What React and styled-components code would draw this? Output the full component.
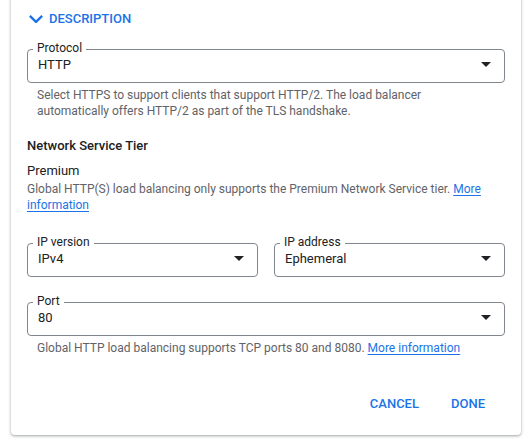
import React from 'react';
import styled, { createGlobalStyle } from 'styled-components';

const Global = createGlobalStyle`
  html, body { margin: 0; padding: 0; background: #fff; }
  body {
    font-family: Roboto, "Noto Sans", Arial, sans-serif;
    color: #202124;
    -webkit-font-smoothing: antialiased;
  }
  * { box-sizing: border-box; }
`;

const Page = styled.div`
  width: 531px;
  height: 441px;
  overflow: hidden;
  padding-left: 11px;
`;

const Card = styled.div`
  width: 510px;
  margin-top: -10px;
  background: #fff;
  border-radius: 0 0 4px 4px;
  box-shadow: 0 1px 2px 0 rgba(60, 64, 67, 0.3), 0 1px 3px 1px rgba(60, 64, 67, 0.15);
  padding: 19px 16px 13px;
  display: flex;
  flex-direction: column;
`;

const Toggle = styled.button`
  all: unset;
  display: flex;
  align-items: center;
  gap: 6px;
  height: 20px;
  padding-left: 2px;
  font-size: 13px;
  font-weight: 500;
  line-height: 20px;
  color: #1a73e8;
  text-transform: uppercase;
  cursor: pointer;
`;

const Field = styled.div`
  position: relative;
  height: 34px;
  border: 1px solid #80868b;
  border-radius: 4px;
  padding: 0 13px 3px 10px;
  display: flex;
  align-items: center;
  justify-content: space-between;
  margin-top: ${p => p.$mt || 0}px;
`;

const FieldLabel = styled.span`
  position: absolute;
  top: -10px;
  left: 5px;
  padding: 0 4px;
  background: #fff;
  font-size: 12px;
  line-height: 16px;
  color: #202124;
  white-space: nowrap;
`;

const FieldValue = styled.span`
  font-size: 13px;
  line-height: 20px;
  color: #202124;
`;

const Helper = styled.p`
  margin: ${p => p.$mt ?? 4}px 0 0;
  padding-left: ${p => p.$indent ? 10 : 0}px;
  font-size: 12px;
  line-height: 16px;
  color: #5f6368;
`;

const Link = styled.a`
  color: #1a73e8;
  text-decoration: underline;
  text-underline-offset: 2px;
  cursor: pointer;
`;

const SectionTitle = styled.h3`
  margin: 17px 0 0;
  font-size: 13px;
  font-weight: 500;
  line-height: 20px;
  color: #202124;
`;

const PlainValue = styled.div`
  margin-top: 5px;
  font-size: 13px;
  line-height: 20px;
  color: #202124;
`;

const TwoCols = styled.div`
  display: grid;
  grid-template-columns: 1fr 1fr;
  gap: 16px;
  margin-top: 30px;
`;

const Actions = styled.div`
  display: flex;
  justify-content: flex-end;
  margin-top: 30px;
  padding-right: 4px;
`;

const TextButton = styled.button`
  all: unset;
  height: 36px;
  padding: 0 16px;
  display: flex;
  align-items: center;
  font-size: 13px;
  font-weight: 500;
  line-height: 20px;
  color: #1a73e8;
  text-transform: uppercase;
  cursor: pointer;
`;

const Chevron = () => (
  <svg width="14" height="8.6" viewBox="6 8.59 12 7.41" aria-hidden="true">
    <path d="M16.59 8.59L12 13.17 7.41 8.59 6 10l6 6 6-6z" fill="#1a73e8" />
  </svg>
);

const DropArrow = () => (
  <svg width="10" height="5" viewBox="7 10 10 5" aria-hidden="true">
    <path d="M7 10l5 5 5-5z" fill="#202124" />
  </svg>
);

const Select = ({ label, value, mt }) => (
  <Field $mt={mt}>
    <FieldLabel>{label}</FieldLabel>
    <FieldValue>{value}</FieldValue>
    <DropArrow />
  </Field>
);

export default function App() {
  return (
    <>
      <Global />
      <Page>
        <Card>
          <Toggle>
            <Chevron />
            Description
          </Toggle>

          <Select label="Protocol" value="HTTP" mt={20} />
          <Helper $indent>
            Select HTTPS to support clients that support HTTP/2. The load balancer
            <br />
            automatically offers HTTP/2 as part of the TLS handshake.
          </Helper>

          <SectionTitle>Network Service Tier</SectionTitle>
          <PlainValue>Premium</PlainValue>
          <Helper $mt={0}>
            Global HTTP(S) load balancing only supports the Premium Network Service tier.{' '}
            <Link>More information</Link>
          </Helper>

          <TwoCols>
            <Select label="IP version" value="IPv4" />
            <Select label="IP address" value="Ephemeral" />
          </TwoCols>

          <Select label="Port" value="80" mt={25} />
          <Helper $indent>
            Global HTTP load balancing supports TCP ports 80 and 8080.{' '}
            <Link>More information</Link>
          </Helper>

          <Actions>
            <TextButton>Cancel</TextButton>
            <TextButton>Done</TextButton>
          </Actions>
        </Card>
      </Page>
    </>
  );
}
